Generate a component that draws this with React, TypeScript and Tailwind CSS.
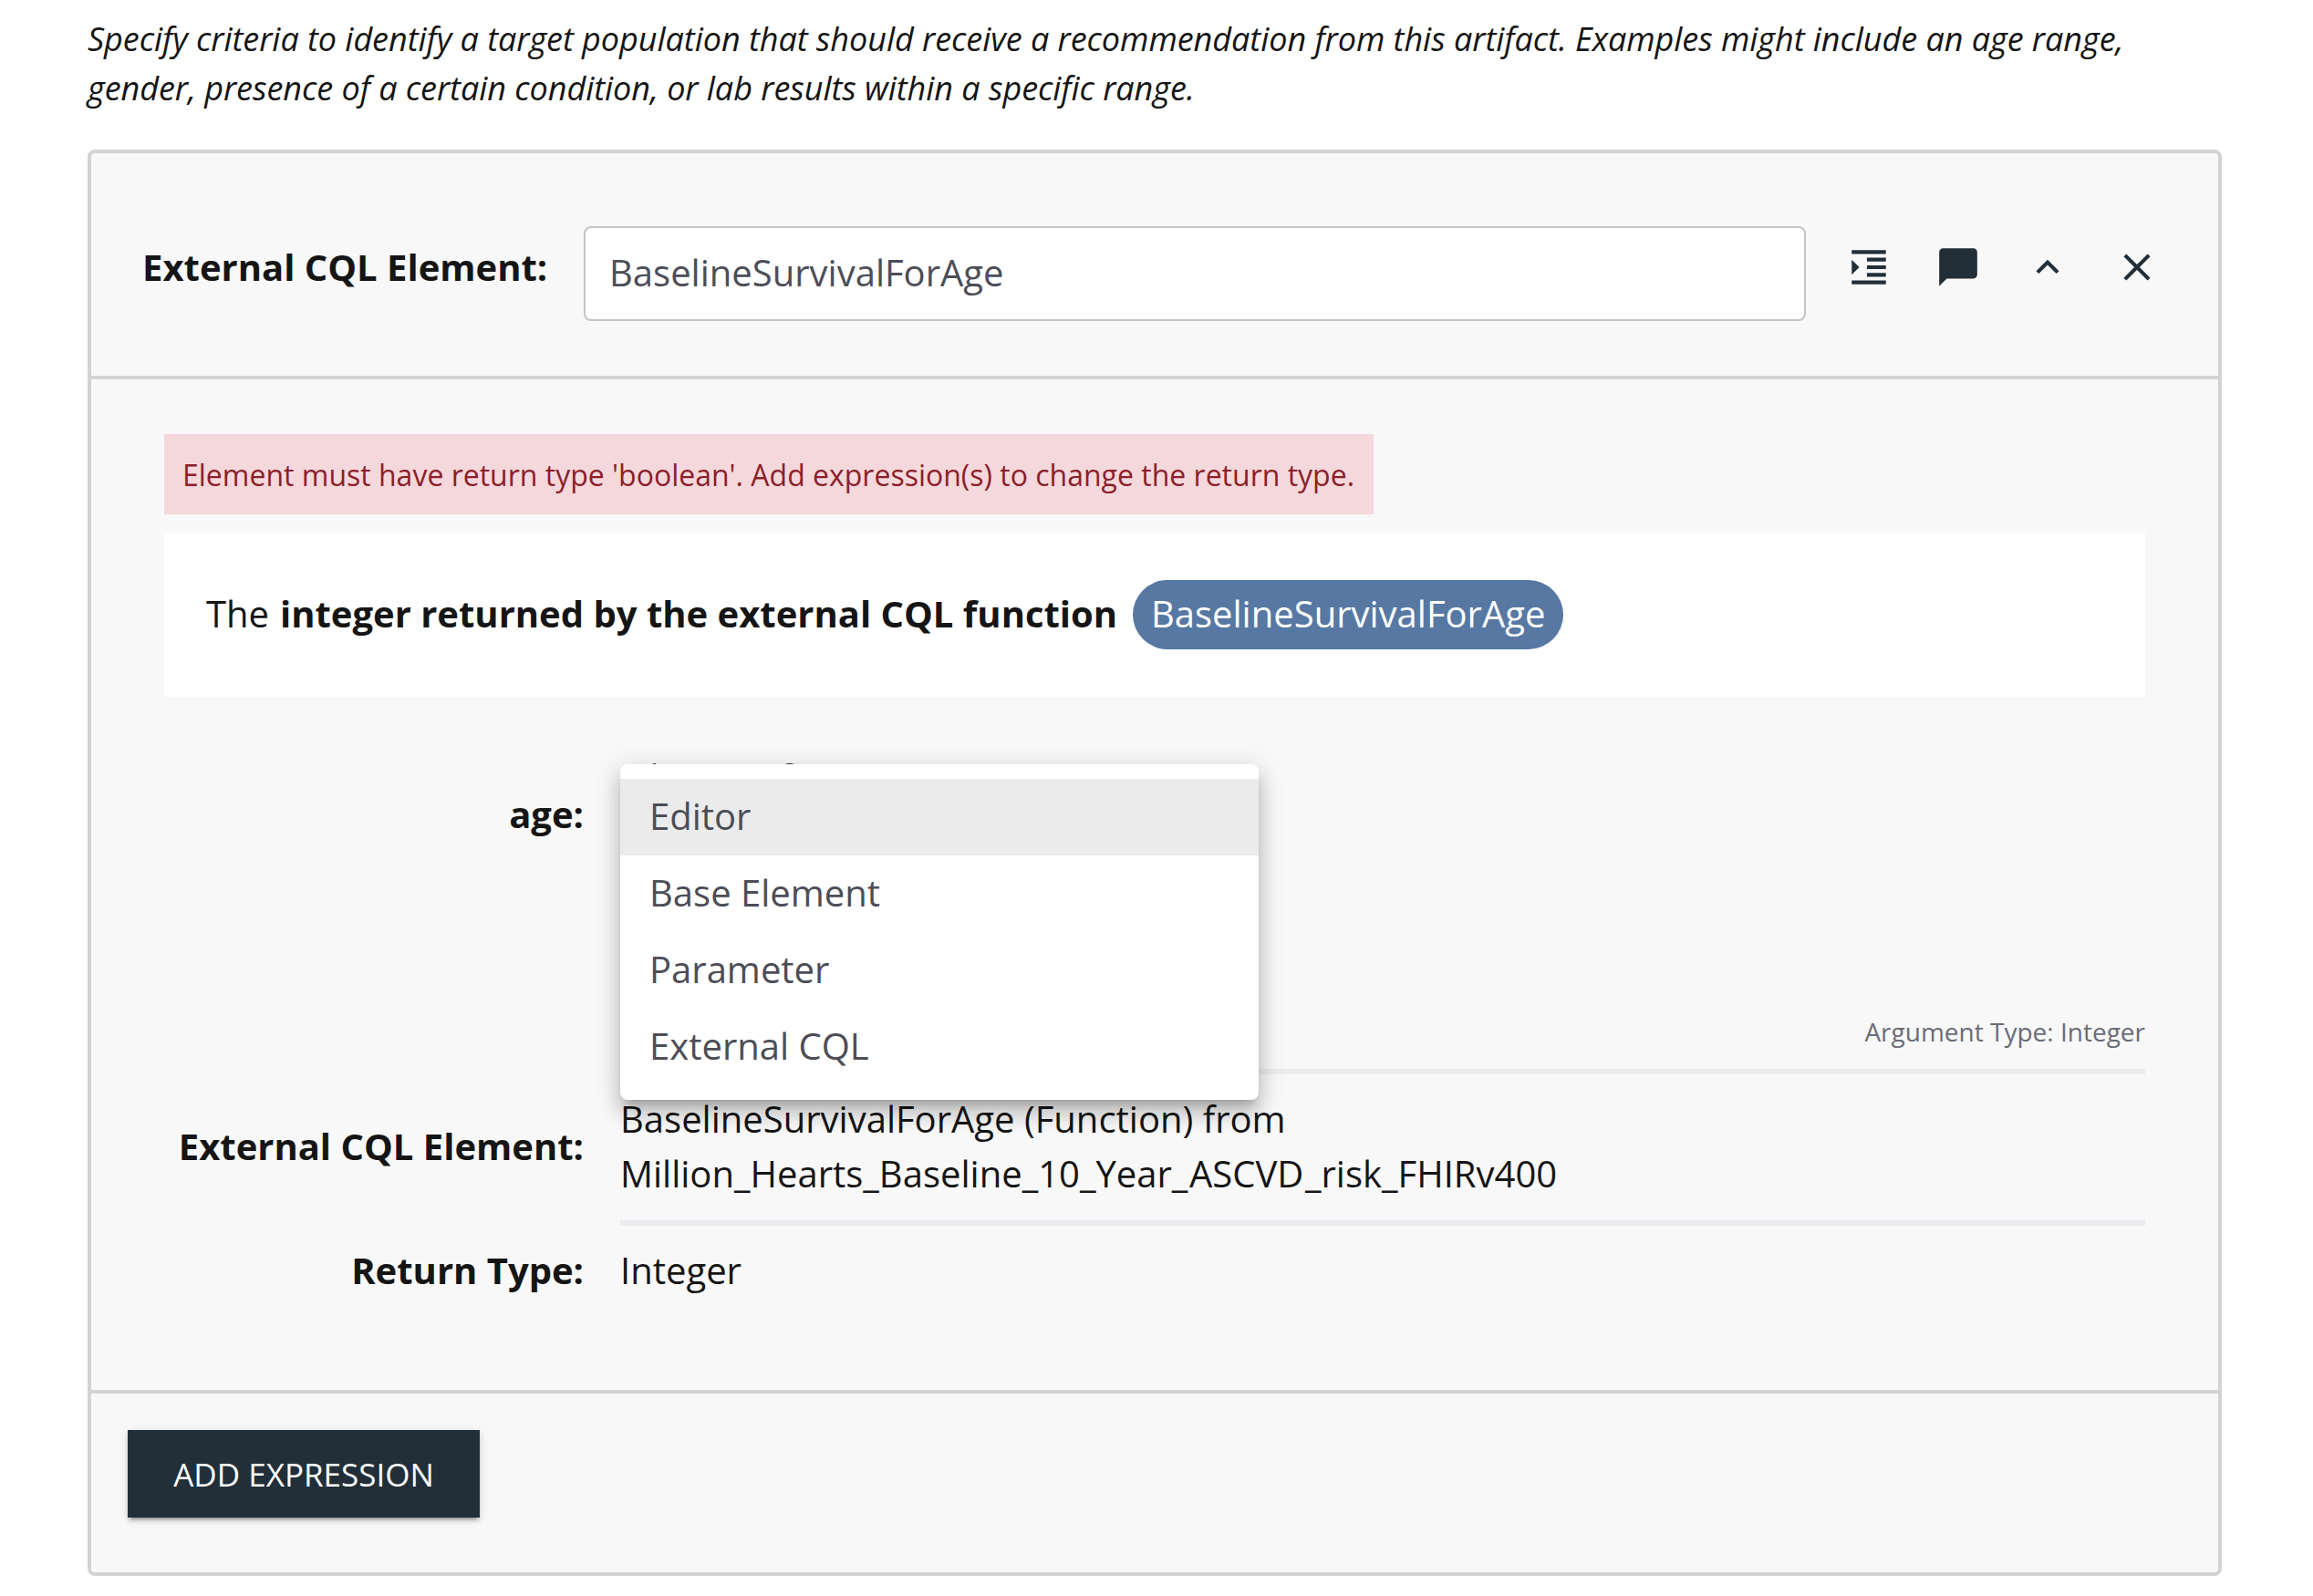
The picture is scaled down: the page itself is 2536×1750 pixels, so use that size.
import type { ReactNode } from "react";

const ICONS = [
  "M3 21h18v-2H3v2zM3 8v8l4-4-4-4zm8 9h10v-2H11v2zM3 3v2h18V3H3zm8 6h10V7H11v2zm0 4h10v-2H11v2z",
  "M20 2H4c-1.1 0-2 .9-2 2v18l4-4h14c1.1 0 2-.9 2-2V4c0-1.1-.9-2-2-2z",
  "M12 8l-6 6 1.41 1.41L12 10.83l4.59 4.58L18 14z",
  "M19 6.41L17.59 5 12 10.59 6.41 5 5 6.41 10.59 12 5 17.59 6.41 19 12 13.41 17.59 19 19 17.59 13.41 12z",
];

const OPTIONS = ["Editor", "Base Element", "Parameter", "External CQL"];

function Label({ children }: { children: ReactNode }) {
  return <div className="w-[460px] shrink-0 text-right font-bold">{children}</div>;
}

function SourceMenu() {
  return (
    <ul className="absolute left-0 top-[18px] z-10 w-[700px] rounded-lg bg-white py-4 text-[#4c4d57] shadow-[0_10px_10px_-6px_rgba(0,0,0,0.2),0_16px_20px_2px_rgba(0,0,0,0.14),0_6px_28px_4px_rgba(0,0,0,0.12)]">
      {OPTIONS.map((option, i) => (
        <li
          key={option}
          className={
            i === 0
              ? "flex h-[84px] items-center bg-[#ebebeb] px-8 pb-[3px]"
              : "flex h-[84px] items-center px-8 pb-[3px]"
          }
        >
          {option}
        </li>
      ))}
    </ul>
  );
}

export default function App() {
  return (
    <div className="h-[1750px] w-[2536px] overflow-hidden bg-white px-[96px] pt-[16px] font-['Open_Sans',sans-serif] text-[40px] leading-[60px] text-[#151515]">
      <p className="h-[148px] text-[36px] italic leading-[54px] tracking-[-0.05px]">
        Specify criteria to identify a target population that should receive a recommendation from this artifact. Examples might include an age range,
        <br />
        gender, presence of a certain condition, or lab results within a specific range.
      </p>

      <section className="w-[2340px] rounded-lg border-4 border-[#d3d3d3] bg-[#f8f8f8]">
        <header className="flex h-[248px] items-start border-b-4 border-[#d3d3d3] pl-[56px] pt-[80px]">
          <div className="w-[484px] pt-[15px] font-bold">External CQL Element:</div>
          <div className="flex h-[104px] w-[1340px] items-center rounded-lg border-2 border-[#c4c4c4] bg-white px-[26px] pb-0.5 text-[#4c4d57]">
            BaselineSurvivalForAge
          </div>
          <div className="ml-[44px] flex gap-12 pt-5">
            {ICONS.map((d) => (
              <svg key={d} viewBox="0 0 24 24" className="size-[50px] fill-[#222f39]">
                <path d={d} />
              </svg>
            ))}
          </div>
        </header>

        <div className="h-[1112px] border-b-4 border-[#d3d3d3] px-20 pt-[60px]">
          <div className="w-[1326px] whitespace-nowrap bg-[#f5d8dc] px-5 pb-[19px] pt-[21px] text-[32px] leading-[48px] text-[#8b1f2b]">
            Element must have return type 'boolean'. Add expression(s) to change the return type.
          </div>
          <div className="mt-5 flex h-[180px] items-center whitespace-pre bg-white px-[46px]">
            <span className="pb-0.5">The </span>
            <span className="ml-[1.5px] w-[935px] pb-0.5 font-bold">integer returned by the external CQL function</span>
            <span className="flex h-[76px] items-center rounded-full bg-[#5778a3] px-5 pb-0.5 text-white">
              BaselineSurvivalForAge
            </span>
          </div>

          <div className="mt-[56px] flex h-[352px] gap-10">
            <Label>
              <div className="pt-[43px]">age:</div>
            </Label>
            <div className="relative flex flex-1 flex-col justify-end">
              <span className="absolute left-7 top-[12px] text-[30px] leading-[30px] tracking-[0.1px] text-[#222f39]">Argument Source</span>
              <SourceMenu />
              <div className="pb-[17px] text-right text-[28px] leading-[48px] text-[#6a6c78]">Argument Type: Integer</div>
            </div>
          </div>
          <div className="ml-[500px] h-1.5 bg-[#ebecf0]" />
          <div className="flex h-[160px] items-center gap-10 pb-0.5">
            <Label>External CQL Element:</Label>
            <div>
              BaselineSurvivalForAge (Function) from
              <br />
              Million_Hearts_Baseline_10_Year_<span className="mx-[1.7px]">ASCVD</span>_risk_FHIRv400
            </div>
          </div>
          <div className="ml-[500px] h-1.5 bg-[#ebecf0]" />
          <div className="flex gap-10 pt-[19px]">
            <Label>Return Type:</Label>
            <div>Integer</div>
          </div>
        </div>

        <footer className="h-[196px] pl-10 pt-10">
          <button className="flex h-[96px] w-[386px] items-center justify-center bg-[#222f39] pt-0.5 text-[35px] text-white shadow-[0_6px_2px_-4px_rgba(0,0,0,0.2),0_4px_4px_0_rgba(0,0,0,0.14),0_2px_10px_0_rgba(0,0,0,0.12)]">
            ADD EXPRESSION
          </button>
        </footer>
      </section>
    </div>
  );
}
